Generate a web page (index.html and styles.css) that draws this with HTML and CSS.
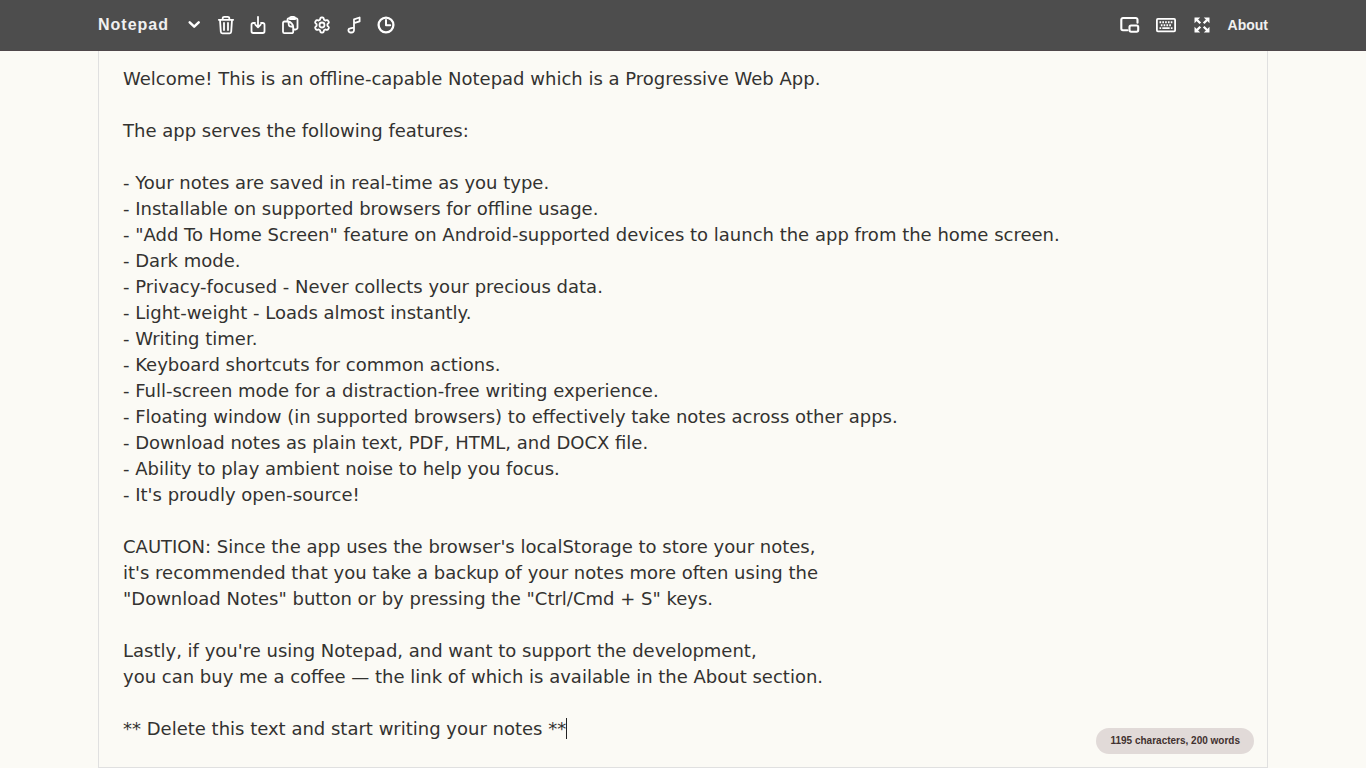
FILE: index.html
```html
<!DOCTYPE html>
<html lang="en">

<head>
    <meta charset="UTF-8" />
    <meta name="viewport" content="width=device-width, initial-scale=1.0" />
    <title>Notepad</title>
    <link rel="stylesheet" href="styles.css">
</head>

<body>
    <header class="navbar">
        <div class="container nav-inner">
            <div class="brand">Notepad</div>
            <div class="nav-tools">
                <button class="icon-btn" type="button" aria-label="Show notes">
                    <svg viewBox="0 0 20 20"><path d="M5.700 7.400l4.500 4.300 4.500-4.300" stroke-width="2.500" /></svg>
                </button>
                <button class="icon-btn" type="button" aria-label="Delete notes">
                    <svg viewBox="0 0 20 20">
                        <path d="M2.800 4.800h14.400M6.700 4.500V3.300a1.500 1.500 0 0 1 1.500-1.500h3.600a1.500 1.500 0 0 1 1.500 1.500v1.200M4 5l.8 11.800a1.600 1.600 0 0 0 1.600 1.500h7.200a1.600 1.600 0 0 0 1.600-1.500L16 5M8 8v7M12 8v7" />
                    </svg>
                </button>
                <button class="icon-btn" type="button" aria-label="Download notes">
                    <svg viewBox="0 0 20 20">
                        <path d="M7 8H5.200a1.700 1.700 0 0 0-1.700 1.700v6.600A1.700 1.700 0 0 0 5.200 18h9.600a1.700 1.700 0 0 0 1.700-1.700V9.700A1.700 1.700 0 0 0 14.800 8H13M10 1.800v10.200M7.300 9.600L10 12.300l2.700-2.700" />
                    </svg>
                </button>
                <button class="icon-btn" type="button" aria-label="Copy notes">
                    <svg viewBox="0 0 20 20">
                        <path d="M7.500 6V5A1.800 1.800 0 0 1 9.300 3.200h6.400A1.800 1.800 0 0 1 17.500 5v7.700a1.800 1.800 0 0 1-1.800 1.800h-2" />
                        <path d="M10 4.200v-1A1.300 1.300 0 0 1 11.300 1.900h2.400A1.300 1.300 0 0 1 15 3.200v1z" />
                        <path d="M8 6.500H4.500A1.500 1.500 0 0 0 3 8v8.700a1.500 1.500 0 0 0 1.500 1.500h7.200a1.500 1.500 0 0 0 1.500-1.500V12c0-2.500-2.500-5.500-5.200-5.500zM8 6.500c1.300 1.200 0 3.500 1.300 4.500 1.200.900 2.700.1 3.900 1" />
                    </svg>
                </button>
                <button class="icon-btn" type="button" aria-label="Settings">
                    <svg viewBox="0 0 20 20">
                        <path d="M8.200 3.700Q8.400 2.500 9.400 2.500h1.200Q11.600 2.500 11.800 3.700L12 4.800 13.300 5.600 14.500 5.200Q15.600 4.800 16.100 5.700L16.700 6.700Q17.200 7.600 16.400 8.300L15.400 9.200v1.600L16.400 11.700Q17.200 12.400 16.700 13.300L16.100 14.300Q15.600 15.200 14.500 14.800L13.300 14.400 12 15.200 11.800 16.300Q11.600 17.500 10.600 17.500H9.400Q8.400 17.500 8.200 16.300L8 15.200 6.700 14.400 5.500 14.800Q4.400 15.200 3.900 14.300L3.300 13.300Q2.800 12.400 3.600 11.700L4.600 10.800V9.200L3.600 8.300Q2.800 7.600 3.300 6.700L3.900 5.700Q4.400 4.800 5.500 5.200L6.700 5.600 8 4.800z" />
                        <circle cx="10" cy="10" r="2.500" />
                    </svg>
                </button>
                <button class="icon-btn" type="button" aria-label="Ambient noise">
                    <svg viewBox="0 0 20 20">
                        <path d="M10 15V4.300l5.600-1.800v3.900L10 8.200M10 12.500v2.500a2.400 2.400 0 0 1-2.400 2.500h-.9a2 2 0 0 1-.4-4.100c1.200-.5 2.500-.6 3.700-.9z" />
                    </svg>
                </button>
                <button class="icon-btn" type="button" aria-label="Writing timer">
                    <svg viewBox="0 0 20 20">
                        <circle cx="10" cy="10" r="7.400" stroke-width="2.300" />
                        <path d="M10 5v5.200h4.200" stroke-width="2" />
                    </svg>
                </button>
            </div>
            <div class="nav-right">
                <button class="icon-btn" type="button" aria-label="Floating window">
                    <svg viewBox="0 0 20 20">
                        <path d="M7.500 15.200H3A1.700 1.700 0 0 1 1.300 13.500V4.700A1.700 1.700 0 0 1 3 3h12.800a1.700 1.700 0 0 1 1.700 1.700v3" stroke-width="2.100" />
                        <rect x="9.500" y="10.500" width="8.700" height="6.200" rx="1.600" stroke-width="2.100" />
                    </svg>
                </button>
                <button class="icon-btn" type="button" aria-label="Keyboard shortcuts">
                    <svg viewBox="0 0 20 20">
                        <rect x=".9" y="3.900" width="18.200" height="12.400" rx="1" stroke-width="1.800" />
                        <path d="M3.500 7.200h13.200M4.800 10.200h11.200" stroke-width="1.900" stroke-dasharray="1.700 1.100" stroke-linecap="butt" />
                        <path d="M3.500 13.200H5.200M6.300 13.200h7.400M14.800 13.200h1.700" stroke-width="1.800" stroke-linecap="butt" />
                    </svg>
                </button>
                <button class="icon-btn" type="button" aria-label="Full screen">
                    <svg viewBox="0 0 20 20">
                        <path d="M4.500 4.500l3.800 3.800M15.500 4.500l-3.800 3.800M4.500 15.500l3.800-3.800M15.500 15.500l-3.800-3.800" stroke-width="2.300" stroke-linecap="butt" />
                        <path class="solid" d="M2.500 2.500h5.700L2.500 8.200zM17.500 2.500v5.700l-5.700-5.700zM2.500 17.500v-5.700l5.700 5.700zM17.500 17.500h-5.700l5.700-5.700z" />
                    </svg>
                </button>
                <a class="about" href="#about">About</a>
            </div>
        </div>
    </header>

    <main class="container editor">
        <textarea id="note" class="note" aria-label="Your notes" spellcheck="false" autofocus>
Welcome! This is an offline-capable Notepad which is a Progressive Web App.

The app serves the following features:

- Your notes are saved in real-time as you type.
- Installable on supported browsers for offline usage.
- "Add To Home Screen" feature on Android-supported devices to launch the app from the home screen.
- Dark mode.
- Privacy-focused - Never collects your precious data.
- Light-weight - Loads almost instantly.
- Writing timer.
- Keyboard shortcuts for common actions.
- Full-screen mode for a distraction-free writing experience.
- Floating window (in supported browsers) to effectively take notes across other apps.
- Download notes as plain text, PDF, HTML, and DOCX file.
- Ability to play ambient noise to help you focus.
- It's proudly open-source!

CAUTION: Since the app uses the browser's localStorage to store your notes,
it's recommended that you take a backup of your notes more often using the
"Download Notes" button or by pressing the "Ctrl/Cmd + S" keys.

Lastly, if you're using Notepad, and want to support the development,
you can buy me a coffee — the link of which is available in the About section.

** Delete this text and start writing your notes **</textarea>
        <div class="caret-layer" aria-hidden="true"><span id="before-caret"></span><span class="caret"></span></div>
        <div class="word-count">1195 characters, 200 words</div>
    </main>

    <script>
        const note = document.getElementById("note");
        const layer = document.querySelector(".caret-layer");
        const beforeCaret = document.getElementById("before-caret");

        // The layer holds the text up to the cursor, so the caret lands after it
        function drawCaret() {
            beforeCaret.textContent = note.value.slice(0, note.selectionEnd);
            layer.scrollTop = note.scrollTop;
        }

        // Put the cursor at the end of the note
        note.focus();
        note.setSelectionRange(note.value.length, note.value.length);
        drawCaret();

        note.addEventListener("input", drawCaret);
        note.addEventListener("scroll", drawCaret);
        document.addEventListener("selectionchange", drawCaret);
    </script>
</body>

</html>
```

FILE: styles.css
```css
* {
    box-sizing: border-box;
}

body {
    margin: 0;
    height: 100vh;
    display: flex;
    flex-direction: column;
    background-color: #fbfaf5;
    color: #333230;
    font-family: "Liberation Sans", Arial, sans-serif;
}

.container {
    width: 100%;
    max-width: 1170px;
    margin: 0 auto;
}

/* Navbar */
.navbar {
    background-color: #4d4d4d;
    border-bottom: 1px solid #4f474a;
    color: #f0f0f0;
}

.nav-inner {
    display: flex;
    align-items: center;
    height: 50px;
}

.brand {
    font-size: 16px;
    font-weight: bold;
    letter-spacing: 1px;
    margin-right: 15px;
}

.nav-tools {
    display: flex;
    align-items: center;
    gap: 12px;
}

.nav-right {
    display: flex;
    align-items: center;
    gap: 16px;
    margin-left: auto;
}

.icon-btn {
    display: block;
    width: 20px;
    height: 20px;
    padding: 0;
    border: none;
    background: none;
    color: #fff;
    cursor: pointer;
}

.icon-btn svg {
    display: block;
    width: 100%;
    height: 100%;
    fill: none;
    stroke: currentColor;
    stroke-width: 1.8;
    stroke-linecap: round;
    stroke-linejoin: round;
}

.icon-btn .solid {
    fill: currentColor;
    stroke: none;
}

.about {
    color: inherit;
    font-size: 14px;
    font-weight: bold;
    text-decoration: none;
}

/* Editor */
.editor {
    flex: 1;
    display: flex;
    position: relative;
}

.note,
.caret-layer {
    padding: 15px 24px;
    border: 1px solid #e0e0e0;
    border-top: none;
    font-family: "DejaVu Sans", sans-serif;
    font-size: 18px;
    line-height: 26px;
}

.note {
    flex: 1;
    outline: none;
    resize: none;
    background: transparent;
    color: inherit;
    caret-color: transparent;
}

/* Caret */
.caret-layer {
    position: absolute;
    inset: 0;
    overflow: hidden;
    border-color: transparent;
    color: transparent;
    white-space: pre-wrap;
    overflow-wrap: break-word;
    pointer-events: none;
}

.caret {
    display: inline-block;
    width: 1px;
    height: 21px;
    margin-right: -1px;
    vertical-align: text-bottom;
    background-color: #222;
}

.note:not(:focus) + .caret-layer {
    visibility: hidden;
}

.word-count {
    position: absolute;
    right: 14px;
    bottom: 14px;
    padding: 0 14px;
    border-radius: 13px;
    background-color: #e1dad8;
    color: #41312f;
    font-size: 10px;
    font-weight: bold;
    line-height: 26px;
}
```
